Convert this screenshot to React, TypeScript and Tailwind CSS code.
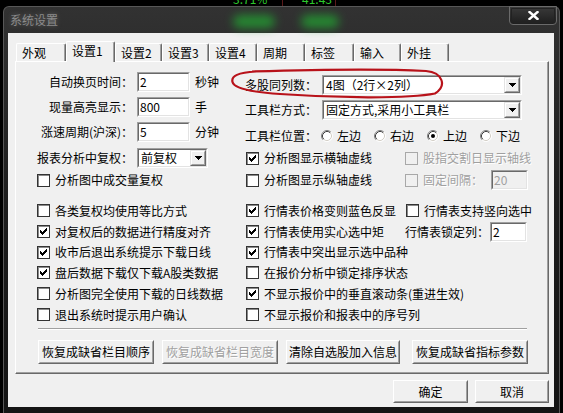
import React from "react";

const sunkOuter = "border border-t-[#a0a0a0] border-l-[#a0a0a0] border-b-white border-r-white";
const sunkInner = "border border-t-[#696969] border-l-[#696969] border-b-[#e3e3e3] border-r-[#e3e3e3]";
const dim = "text-[#a0a0a0] [text-shadow:1px_1px_0_#fff]";

function CheckMark() {
  // classic 7x7 tick
  return (
    <svg width="7" height="7" viewBox="0 0 7 7" shapeRendering="crispEdges">
      <rect x="6" y="0" width="1" height="1" fill="#000" />
      <rect x="5" y="1" width="2" height="1" fill="#000" />
      <rect x="0" y="2" width="1" height="1" fill="#000" />
      <rect x="4" y="2" width="3" height="1" fill="#000" />
      <rect x="0" y="3" width="2" height="1" fill="#000" />
      <rect x="3" y="3" width="3" height="1" fill="#000" />
      <rect x="0" y="4" width="5" height="1" fill="#000" />
      <rect x="1" y="5" width="3" height="1" fill="#000" />
      <rect x="2" y="6" width="1" height="1" fill="#000" />
    </svg>
  );
}

function Check({ on = false, disabled = false }: { on?: boolean; disabled?: boolean }) {
  return (
    <span
      className={`flex h-[13px] w-[13px] shrink-0 items-center justify-center border ${
        disabled ? "border-[#a8a8a8] bg-[#f0f0f0]" : "border-[#333] bg-white shadow-[inset_1px_1px_0_#8a8a8a]"
      }`}
    >
      {on && <CheckMark />}
    </span>
  );
}

function Radio({ on = false }: { on?: boolean }) {
  return (
    <svg width="12" height="12" viewBox="0 0 12 12" className="shrink-0">
      <circle cx="6" cy="6" r="5" fill="#fff" />
      <path d="M2.11 9.89 A5.5 5.5 0 0 1 9.89 2.11" stroke="#808080" fill="none" />
      <path d="M9.89 2.11 A5.5 5.5 0 0 1 2.11 9.89" stroke="#fff" fill="none" />
      <path d="M2.82 9.18 A4.5 4.5 0 0 1 9.18 2.82" stroke="#404040" fill="none" />
      <path d="M9.18 2.82 A4.5 4.5 0 0 1 2.82 9.18" stroke="#d4d0c8" fill="none" />
      {on && <circle cx="6" cy="6" r="2" fill="#000" />}
    </svg>
  );
}

function Field({ value, className = "", disabled = false }: { value: string; className?: string; disabled?: boolean }) {
  return (
    <div className={`h-[20px] ${sunkOuter} ${className}`}>
      <div className={`flex h-full items-center pl-[1px] ${sunkInner} ${disabled ? "bg-[#f0f0f0] text-[#a0a0a0]" : "bg-white"}`}>
        {value}
      </div>
    </div>
  );
}

function DropBtn() {
  return (
    <div className="h-full w-[16px] border border-t-[#e3e3e3] border-l-[#e3e3e3] border-b-[#696969] border-r-[#696969]">
      <div className="flex h-full items-center justify-center border border-t-white border-l-white border-b-[#a0a0a0] border-r-[#a0a0a0] bg-[#f0f0f0]">
        <svg width="7" height="4" viewBox="0 0 7 4" shapeRendering="crispEdges">
          <rect x="0" y="0" width="7" height="1" fill="#000" />
          <rect x="1" y="1" width="5" height="1" fill="#000" />
          <rect x="2" y="2" width="3" height="1" fill="#000" />
          <rect x="3" y="3" width="1" height="1" fill="#000" />
        </svg>
      </div>
    </div>
  );
}

function Combo({ value, className = "" }: { value: string; className?: string }) {
  return (
    <div className={`h-[20px] ${sunkOuter} ${className}`}>
      <div className={`flex h-full bg-white ${sunkInner}`}>
        <span className="flex flex-1 items-center pl-[2px]">{value}</span>
        <DropBtn />
      </div>
    </div>
  );
}

function Btn({ label, className = "", disabled = false }: { label: string; className?: string; disabled?: boolean }) {
  return (
    <div className={`border border-t-white border-l-white border-b-[#696969] border-r-[#696969] ${className}`}>
      <div
        className={`flex h-full items-center justify-center border border-t-[#f0f0f0] border-l-[#f0f0f0] border-b-[#a0a0a0] border-r-[#a0a0a0] bg-[#f0f0f0] ${
          disabled ? dim : ""
        }`}
      >
        {label}
      </div>
    </div>
  );
}

function Opt({ label, on = false, disabled = false, className = "" }: { label: string; on?: boolean; disabled?: boolean; className?: string }) {
  return (
    <div className={`flex items-center gap-[5px] ${className}`}>
      <Check on={on} disabled={disabled} />
      <span className={disabled ? dim : ""}>{label}</span>
    </div>
  );
}

const tabs = [
  { label: "外观", w: "w-[50px]" },
  { label: "设置1", w: "w-[49px]", active: true },
  { label: "设置2", w: "w-[47px]" },
  { label: "设置3", w: "w-[47px]" },
  { label: "设置4", w: "w-[48px]" },
  { label: "周期", w: "w-[48px]" },
  { label: "标签", w: "w-[49px]" },
  { label: "输入", w: "w-[47px]" },
  { label: "外挂", w: "w-[48px]" },
];

export default function App() {
  return (
    <div className="relative h-[413px] w-[563px] overflow-hidden bg-black font-['Noto_Sans_CJK_SC','Noto_Sans',sans-serif] text-[12px] leading-[14px] text-black">
      {/* chart behind the window, only its lower edge shows */}
      <div className="relative h-[6px] overflow-hidden">
        <span className="absolute left-[233px] top-[-8px] text-[12px] text-[#2cc82c]">3.71%</span>
        <span className="absolute left-[302px] top-[-8px] text-[12px] text-[#2cc82c]">41.43</span>
        <span className="absolute left-[282px] top-0 h-full w-[1px] bg-[#5a1a1a]" />
        <span className="absolute left-[335px] top-0 h-full w-[1px] bg-[#5a1a1a]" />
      </div>

      {/* window */}
      <div className="relative mx-[3px] flex h-[407px] flex-col rounded-t-[6px] border border-b-0 border-[#575757] bg-gradient-to-b from-[#323232] via-[#1c1c1c] to-[#141414]">
        <div className="pointer-events-none absolute left-[229px] top-[8px] h-[13px] w-[42px] rounded-full bg-[#23a032] opacity-80 blur-[5px]" />
        <div className="pointer-events-none absolute left-[297px] top-[8px] h-[13px] w-[38px] rounded-full bg-[#23a032] opacity-80 blur-[5px]" />

        <div className="flex h-[26px] items-start justify-between">
          <span className="pl-[6px] pt-[6px] text-[12px] text-[#8a8a8a] [text-shadow:0_0_5px_rgba(200,200,200,0.35)]">系统设置</span>
          <div className="-mt-[1px] mr-[2px] h-[19px] w-[48px] rounded-b-[4px] border border-[#6a6a6a] bg-gradient-to-b from-[#3a3a3a] to-[#1e1e1e] p-[1px]">
            <div className="flex h-full items-center justify-center rounded-b-[3px] border border-[#222]">
              <svg width="11" height="9" viewBox="0 0 11 9">
                <path d="M1.5 1 L9.5 8 M9.5 1 L1.5 8" stroke="#fff" strokeWidth="2.4" strokeLinecap="square" />
              </svg>
            </div>
          </div>
        </div>

        {/* client area */}
        <div className="ml-[4px] mr-[5px] flex h-[374px] flex-col bg-[#f0f0f0] pl-[7px] pt-[8px]">
          <div className="ml-[1px] flex h-[20px] items-end">
            {tabs.map((t) =>
              t.active ? (
                <div
                  key={t.label}
                  className={`relative z-10 -mb-[1px] h-[21px] ${t.w} rounded-t-[2px] border-l border-t border-r border-l-white border-t-white border-r-[#696969] bg-[#f0f0f0] pl-[5px] pt-[2px] shadow-[inset_-1px_0_0_#a0a0a0]`}
                >
                  {t.label}
                </div>
              ) : (
                <div
                  key={t.label}
                  className={`h-[18px] ${t.w} rounded-t-[2px] border-l border-t border-r border-l-white border-t-white border-r-[#696969] pl-[5px] pt-[2px] shadow-[inset_-1px_0_0_#a0a0a0]`}
                >
                  {t.label}
                </div>
              )
            )}
          </div>

          {/* tab page */}
          <div className="h-[313px] w-[534px] border border-t-white border-l-white border-b-[#696969] border-r-[#696969] pl-[21px] shadow-[inset_-1px_-1px_0_#a0a0a0]">
            <div className="flex h-[129px]">
              <div className="flex w-[208px] flex-col pt-[10px]">
                <div className="flex h-[20px] items-center">
                  <span className="w-[96px] text-right">自动换页时间：</span>
                  <Field value="2" className="ml-[4px] w-[53px]" />
                  <span className="ml-[5px]">秒钟</span>
                </div>
                <div className="mt-[5px] flex h-[20px] items-center">
                  <span className="w-[96px] text-right">现量高亮显示：</span>
                  <Field value="800" className="ml-[4px] w-[53px]" />
                  <span className="ml-[5px]">手</span>
                </div>
                <div className="mt-[5px] flex h-[20px] items-center">
                  <span className="w-[96px] text-right">涨速周期(沪深)：</span>
                  <Field value="5" className="ml-[4px] w-[53px]" />
                  <span className="ml-[5px]">分钟</span>
                </div>
                <div className="mt-[6px] flex h-[20px] items-center">
                  <span className="w-[96px] text-right">报表分析中复权：</span>
                  <Combo value="前复权" className="ml-[4px] w-[71px]" />
                </div>
                <Opt label="分析图中成交量复权" className="mt-[2px] h-[20px]" />
              </div>

              <div className="flex flex-col pt-[13px]">
                <div className="flex h-[20px] items-center">
                  <span className="w-[77px]">多股同列数：</span>
                  <Combo value="4图（2行×2列）" className="w-[200px]" />
                </div>
                <div className="mt-[5px] flex h-[20px] items-center">
                  <span className="w-[77px]">工具栏方式：</span>
                  <Combo value="固定方式,采用小工具栏" className="w-[200px]" />
                </div>
                <div className="mt-[6px] flex h-[20px] items-center">
                  <span className="w-[76px]">工具栏位置：</span>
                  <div className="flex items-center gap-[13px]">
                    {[
                      ["左边", false],
                      ["右边", false],
                      ["上边", true],
                      ["下边", false],
                    ].map(([l, on]) => (
                      <div key={l as string} className="flex items-center gap-[4px]">
                        <Radio on={on as boolean} />
                        <span>{l as string}</span>
                      </div>
                    ))}
                  </div>
                </div>
                <div className="mt-[2px] flex h-[20px] items-center">
                  <Opt label="分析图显示横轴虚线" on className="ml-[1px] w-[159px]" />
                  <Opt label="股指交割日显示轴线" disabled />
                </div>
                <div className="mt-[2px] flex h-[20px] items-center">
                  <Opt label="分析图显示纵轴虚线" className="ml-[1px] w-[159px]" />
                  <Opt label="固定间隔：" disabled />
                  <Field value="20" disabled className="ml-[8px] w-[37px]" />
                </div>
              </div>
            </div>

            <div className="mt-[9px] flex flex-col">
              <div className="flex h-[21px] items-center">
                <Opt label="各类复权均使用等比方式" className="w-[208px]" />
                <Opt label="行情表价格变则蓝色反显" on className="ml-[1px] w-[159px]" />
                <Opt label="行情表支持竖向选中" className="ml-[1px]" />
              </div>
              <div className="flex h-[21px] items-center">
                <Opt label="对复权后的数据进行精度对齐" on className="w-[208px]" />
                <Opt label="行情表使用实心选中矩" on className="ml-[1px] w-[159px]" />
                <span className="w-[85px]">行情表锁定列：</span>
                <Field value="2" className="w-[37px]" />
              </div>
              <div className="flex h-[20px] items-center">
                <Opt label="收市后退出系统提示下载日线" on className="w-[208px]" />
                <Opt label="行情表中突出显示选中品种" on className="ml-[1px]" />
              </div>
              <div className="flex h-[21px] items-center">
                <Opt label="盘后数据下载仅下载A股类数据" on className="w-[208px]" />
                <Opt label="在报价分析中锁定排序状态" className="ml-[1px]" />
              </div>
              <div className="flex h-[21px] items-center">
                <Opt label="分析图完全使用下载的日线数据" className="w-[208px]" />
                <Opt label="不显示报价中的垂直滚动条(重进生效)" on className="ml-[1px]" />
              </div>
              <div className="flex h-[21px] items-center">
                <Opt label="退出系统时提示用户确认" className="w-[208px]" />
                <Opt label="不显示报价和报表中的序号列" className="ml-[1px]" />
              </div>
            </div>

            <div className="ml-[1px] mt-[3px] h-[2px] w-[489px] border-t border-b border-t-[#a0a0a0] border-b-white" />

            <div className="mt-[10px] flex">
              <Btn label="恢复成缺省栏目顺序" className="ml-[1px] h-[24px] w-[116px]" />
              <Btn label="恢复成缺省栏目宽度" disabled className="ml-[8px] h-[24px] w-[116px]" />
              <Btn label="清除自选股加入信息" className="ml-[8px] h-[24px] w-[114px]" />
              <Btn label="恢复成缺省指标参数" className="ml-[12px] h-[24px] w-[116px]" />
            </div>
          </div>

          <div className="mr-[5px] mt-[6px] flex justify-end gap-[7px]">
            <Btn label="确定" className="h-[23px] w-[75px]" />
            <Btn label="取消" className="h-[23px] w-[74px]" />
          </div>
        </div>
      </div>

      {/* red hand-drawn annotation */}
      <svg className="pointer-events-none absolute left-0 top-0 z-20" width="563" height="413">
        <path
          d="M252 71.5 C300 70 380 68.5 426 71 C443 72.5 447 86 435 93.5 C410 98.5 340 98.5 280 94 C250 92 234 88 232.5 82 C231 76 238 72.5 256 71.5"
          stroke="#b8121a"
          strokeWidth="2.2"
          fill="none"
        />
      </svg>
    </div>
  );
}
